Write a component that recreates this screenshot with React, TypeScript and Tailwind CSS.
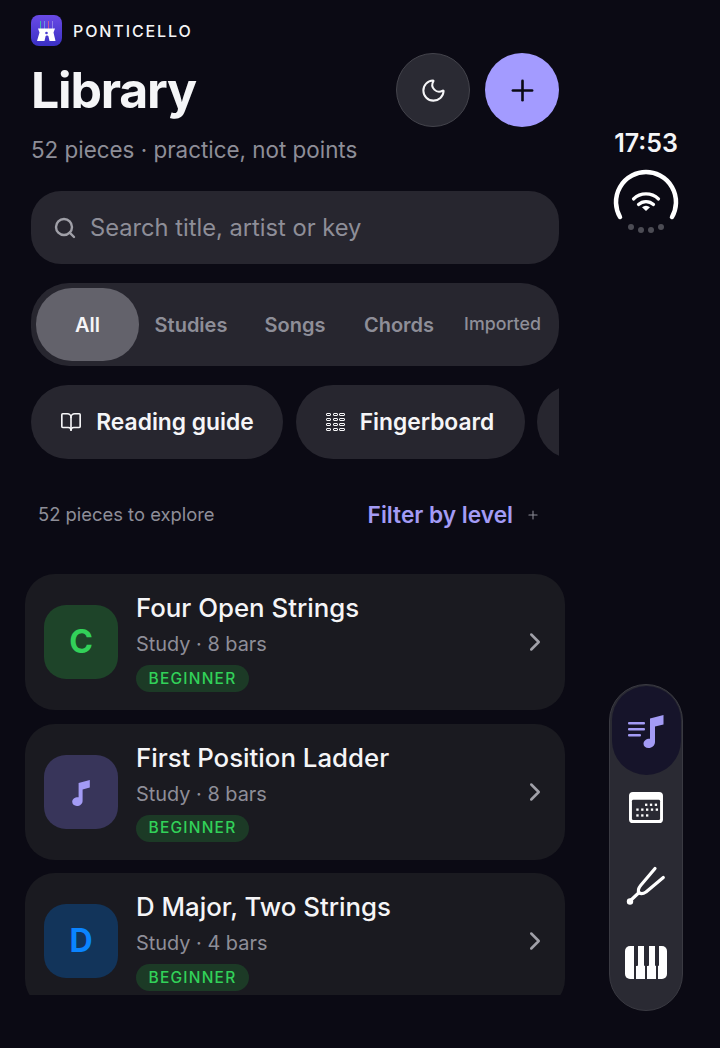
import { BookOpen, ChevronRight, Moon, Plus, Search } from "lucide-react";

interface Piece {
  title: string;
  meta: string;
  letter?: string;
  tileClass: string;
  letterClass?: string;
}

const pieces: Piece[] = [
  { title: "Four Open Strings", meta: "Study · 8 bars", letter: "C", tileClass: "bg-[#1e4429]", letterClass: "text-[#32d159]" },
  { title: "First Position Ladder", meta: "Study · 8 bars", tileClass: "bg-[#38355a]" },
  { title: "D Major, Two Strings", meta: "Study · 4 bars", letter: "D", tileClass: "bg-[#12345a]", letterClass: "text-[#0a84ff]" },
];

function NoteIcon({ className }: { className?: string }) {
  return (
    <svg viewBox="0 0 24 24" className={className} fill="currentColor">
      <path d="M10.2 5.2 18.6 3v5.6l-5.4 1.5v8.4c0 2.4-1.9 4-4.3 4-2 0-3.5-1.3-3.5-3.1 0-2 1.9-3.5 4.3-3.5.2 0 .4 0 .5 0z" />
    </svg>
  );
}

function AppLogo() {
  return (
    <div className="flex h-[31px] w-[31px] items-center justify-center rounded-[8px] bg-gradient-to-b from-[#6a4ae6] to-[#3a30c4]">
      <svg viewBox="0 0 31 31" className="h-[31px] w-[31px]">
        <path d="M9.500 6v8" stroke="#3fb8a8" strokeWidth="1" />
        <path d="M13.500 6v8" stroke="#6f8fe8" strokeWidth="1" />
        <path d="M17.500 6v8" stroke="#c85a9a" strokeWidth="1" />
        <path d="M21.500 6v8" stroke="#8f7fe8" strokeWidth="1" />
        <path
          d="M7 13.500h17l-1.500 4 2 8.500h-6l-1-4.500c-.3-1.200-2.700-1.200-3 0l-1 4.500H6l2.500-8.500z"
          fill="#ffffff"
        />
        <circle cx="15.500" cy="18" r="1.300" fill="#4a3cd0" />
      </svg>
    </div>
  );
}

function FingerboardIcon() {
  const cells = [0, 1, 2, 3, 4, 5, 6, 7, 8, 9, 10, 11];
  return (
    <div className="grid h-[18px] w-[19px] grid-cols-3 grid-rows-4 gap-[1.500px]">
      {cells.map((c) => (
        <span key={c} className="rounded-[1px] border border-[#f5f5f7]" />
      ))}
    </div>
  );
}

function PieceCard({ piece }: { piece: Piece }) {
  return (
    <div className="flex h-[136px] shrink-0 items-center rounded-[30px] bg-[#1a1a20] pl-[19px] pr-[15px]">
      <div className={`flex h-[74px] w-[74px] shrink-0 items-center justify-center rounded-[22px] ${piece.tileClass}`}>
        {piece.letter ? (
          <span className={`text-[32px] font-bold ${piece.letterClass}`}>{piece.letter}</span>
        ) : (
          <NoteIcon className="h-[32px] w-[32px] text-[#a39bf5]" />
        )}
      </div>
      <div className="ml-[18px] flex-1">
        <div className="text-[25.800px] font-medium leading-[32px] text-[#f5f5f7]">{piece.title}</div>
        <div className="mt-[7px] text-[19.900px] leading-[26px] text-[#8e8e98]">{piece.meta}</div>
        <span className="mt-[8px] flex h-[27px] w-[113px] items-center justify-center rounded-full bg-[#1c3a26] text-[15.500px] font-medium tracking-[1.200px] text-[#32d159]">
          BEGINNER
        </span>
      </div>
      <ChevronRight size={30} strokeWidth={2} className="text-[#a0a0a8]" />
    </div>
  );
}

function StatusGauge() {
  return (
    <svg viewBox="0 0 70 70" className="mt-[8px] h-[70px] w-[70px]">
      <path d="M9 51A30 30 0 1 1 61 51" fill="none" stroke="#ffffff" strokeWidth="4.500" strokeLinecap="round" />
      <path d="M22.500 33a18 18 0 0 1 25 0" fill="none" stroke="#ffffff" strokeWidth="3.200" strokeLinecap="round" />
      <path d="M27.500 38.500a11 11 0 0 1 15 0" fill="none" stroke="#ffffff" strokeWidth="3.200" strokeLinecap="round" />
      <path d="M35 45l-4-3.800a6 6 0 0 1 8 0z" fill="#ffffff" />
      <circle cx="20" cy="61" r="3" fill="#4c4c54" />
      <circle cx="30" cy="64" r="3" fill="#4c4c54" />
      <circle cx="40" cy="64" r="3" fill="#4c4c54" />
      <circle cx="50" cy="61" r="3" fill="#4c4c54" />
    </svg>
  );
}

function NavRail() {
  return (
    <div className="flex h-[327px] w-[74px] flex-col items-center rounded-full border border-[#3a3a42] bg-[#2a2a33] p-[1px]">
      <div className="flex h-[89px] w-[69px] shrink-0 items-center justify-center rounded-full bg-[#16142a]">
        <svg viewBox="0 0 40 40" className="h-[40px] w-[40px] text-[#a39bf5]" fill="currentColor">
          <rect x="2" y="11" width="17" height="2.500" rx="1" />
          <rect x="2" y="17" width="17" height="2.500" rx="1" />
          <rect x="2" y="23" width="13" height="2.500" rx="1" />
          <path d="M24 7.500 37.500 4v9.500L29 15.500V31c0 3.400-3 6-6.500 6-3 0-5-1.800-5-4.200 0-2.900 2.700-5 6-5 .2 0 .4 0 .5 0z" />
        </svg>
      </div>
      <div className="flex flex-1 flex-col items-center pt-[16px]">
        <svg viewBox="0 0 36 34" className="h-[33px] w-[36px]">
          <rect x="0.500" y="1" width="35" height="32" rx="4" fill="#ffffff" />
          <rect x="3.500" y="9" width="29" height="21" rx="1.500" fill="#2a2a33" />
          {[[17, 13], [22, 13], [27, 13], [8, 18], [13, 18], [18, 18], [23, 18], [28, 18], [8, 24], [13, 24], [18, 24]].map(([x, y]) => (
            <rect key={`${x}-${y}`} x={x} y={y} width="2.400" height="2.400" fill="#ffffff" />
          ))}
        </svg>
        <svg viewBox="0 0 40 40" className="mt-[42px] h-[40px] w-[40px]" fill="none" stroke="#ffffff" strokeWidth="3.200" strokeLinecap="round">
          <path d="M4 35 12.500 27" />
          <path d="M29 2.500 15 19Q11 24 13 26.500 15.500 29 20 26L37.300 11.500" strokeLinejoin="round" />
          <circle cx="4" cy="35.500" r="3.200" fill="#ffffff" stroke="none" />
        </svg>
        <div className="relative mt-[40px] flex h-[33px] w-[42px] gap-[1.500px] overflow-hidden rounded-[5px]">
          <span className="flex-1 bg-white" />
          <span className="flex-1 bg-white" />
          <span className="flex-1 bg-white" />
          <span className="flex-1 bg-white" />
          <span className="absolute left-[8.500px] top-0 h-[20px] w-[4.500px] rounded-b-[1px] bg-[#2a2a33]" />
          <span className="absolute left-[19px] top-0 h-[20px] w-[4.500px] rounded-b-[1px] bg-[#2a2a33]" />
          <span className="absolute left-[29.500px] top-0 h-[20px] w-[4.500px] rounded-b-[1px] bg-[#2a2a33]" />
        </div>
      </div>
    </div>
  );
}

export default function App() {
  const tabs = ["Studies", "Songs", "Chords"];

  return (
    <div className="flex h-[1048px] w-[720px] overflow-hidden bg-[#0b0a14] font-['Inter',sans-serif] text-[#f5f5f7]">
      <main className="flex h-[995px] w-[590px] shrink-0 flex-col overflow-hidden">
        <div className="flex flex-col px-[31px]">
          <div className="relative h-[175px]">
            <div className="flex items-center gap-[11px] pt-[15px]">
              <AppLogo />
              <span className="text-[16px] font-medium tracking-[1.900px]">PONTICELLO</span>
            </div>
            <h1 className="mt-[14px] text-[50px] font-bold leading-[60px] tracking-[-1.200px]">Library</h1>
            <p className="mt-[15px] text-[22.400px] leading-[30px] text-[#8e8e98]">52 pieces · practice, not points</p>
            <div className="absolute right-0 top-[53px] flex gap-[15px]">
              <button className="flex h-[74px] w-[74px] items-center justify-center rounded-full border border-[#44444c] bg-[#2a2a33]">
                <Moon size={27} strokeWidth={1.800} />
              </button>
              <button className="flex h-[74px] w-[74px] items-center justify-center rounded-full bg-[#a39bff] text-[#0b0a14]">
                <Plus size={33} strokeWidth={1.900} />
              </button>
            </div>
          </div>

          <div className="mt-[16px] flex h-[73px] items-center gap-[13px] rounded-[30px] bg-[#27262f] pl-[22px]">
            <Search size={24} strokeWidth={2.400} className="text-[#a0a0a8]" />
            <span className="text-[23.700px] text-[#8e8e98]">Search title, artist or key</span>
          </div>

          <div className="mt-[19px] flex h-[83px] items-center rounded-[38px] bg-[#27262f] px-[5px]">
            <div className="flex h-[73px] w-[103px] shrink-0 items-center justify-center rounded-[36px] bg-[#63626b] text-[20px] font-semibold">
              All
            </div>
            {tabs.map((t) => (
              <div key={t} className="flex w-[104px] shrink-0 items-center justify-center text-[20px] font-semibold text-[#8e8e98]">
                {t}
              </div>
            ))}
            <div className="w-[104px] text-center text-[17.800px] font-medium text-[#8e8e98]">Imported</div>
          </div>

          <div className="mt-[19px] flex h-[74px] gap-[12.500px] overflow-hidden">
            <div className="flex h-[74px] w-[252px] shrink-0 items-center justify-center gap-[14px] rounded-[37px] bg-[#27262f]">
              <BookOpen size={22} strokeWidth={1.800} />
              <span className="text-[22.800px] font-semibold">Reading guide</span>
            </div>
            <div className="flex h-[74px] w-[229px] shrink-0 items-center justify-center gap-[15px] rounded-[37px] bg-[#27262f]">
              <FingerboardIcon />
              <span className="text-[22.800px] font-semibold">Fingerboard</span>
            </div>
            <div className="h-[74px] w-[120px] shrink-0 rounded-[37px] bg-[#27262f]" />
          </div>

          <div className="mt-[41px] flex h-[30px] items-center pl-[7px] pr-[19px]">
            <span className="text-[18.400px] text-[#8e8e98]">52 pieces to explore</span>
            <span className="ml-auto text-[22.700px] font-semibold text-[#a39bf5]">Filter by level</span>
            <Plus size={14} strokeWidth={1.800} className="ml-[13px] text-[#8e8e98]" />
          </div>
        </div>

        <div className="mt-[44px] flex flex-col gap-[13.500px] pl-[25px] pr-[25px]">
          {pieces.map((p) => (
            <PieceCard key={p.title} piece={p} />
          ))}
        </div>
      </main>

      <aside className="flex w-[112px] shrink-0 flex-col items-center">
        <div className="mt-[128px] text-[25px] font-semibold leading-[30px]">17:53</div>
        <StatusGauge />
        <div className="mt-auto mb-[37px]">
          <NavRail />
        </div>
      </aside>
    </div>
  );
}
